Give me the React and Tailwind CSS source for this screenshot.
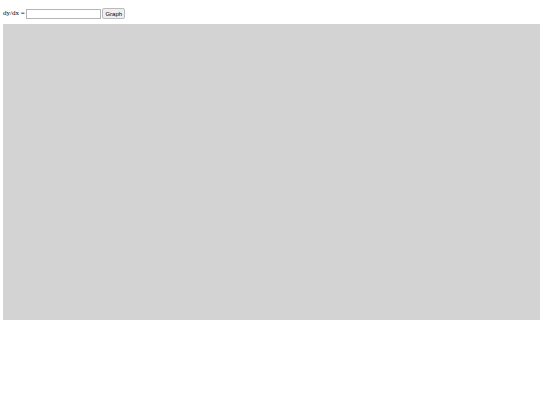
export default function App() {
  return (
    <div className="font-['Liberation_Serif',serif] text-[7px] text-black">
      <div className="flex items-center pl-[3px] pt-[8px] h-[19px]">
        <span>dy/dx =&nbsp;</span>
        <input
          type="text"
          className="w-[75px] h-[10px] border border-[#b5b5b5] bg-white outline-none"
        />
        <button className="ml-[1px] h-[11px] px-[2px] border border-[#bbb] rounded-[2px] bg-[#efefef] font-['Liberation_Sans',sans-serif] text-[6px] leading-none">
          Graph
        </button>
      </div>
      <div className="ml-[3px] mt-[5px] w-[540px] h-[296px] bg-[#d3d3d3]"></div>
    </div>
  );
}
